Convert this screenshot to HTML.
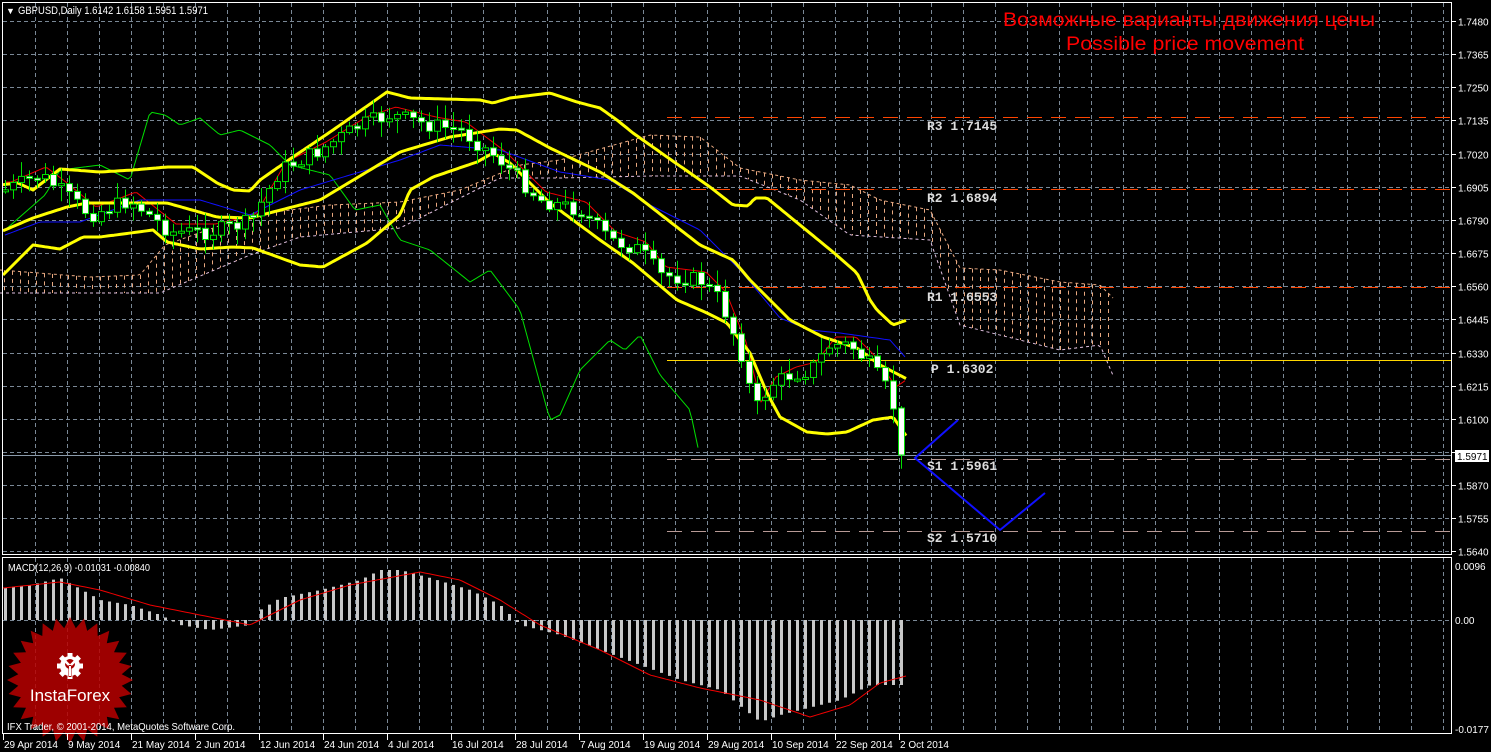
<!DOCTYPE html>
<html><head><meta charset="utf-8"><style>
html,body{margin:0;padding:0;background:#000;}
svg{display:block;font-family:"Liberation Sans",sans-serif;}
</style></head><body>
<svg id="s" width="1491" height="752" viewBox="0 0 1491 752" xmlns="http://www.w3.org/2000/svg">
<rect width="1491" height="752" fill="#000"/>
<g id="grid"></g>
<g id="cloud"></g>
<g id="ind"></g>
<g id="cand"></g>
<g id="macd"></g>
<g id="logo">
<polygon id="star" fill="#b80000" fill-opacity="0.85"/>
<g id="gear" fill="#fff"></g>
<circle cx="70" cy="664" r="5" fill="#a80000"/>
<path d="M64 660 L70 666 L76 660" stroke="#fff" stroke-width="2.5" fill="none"/>
<rect x="68.5" y="665" width="3" height="12" fill="#a80000"/>
<rect x="69" y="666" width="2" height="10" fill="#fff"/>
<text x="70" y="701" fill="#fff" font-size="17" text-anchor="middle">InstaForex</text>
</g>
<g fill="none" stroke="#fff" stroke-width="1">
<rect x="2.5" y="2.5" width="1449" height="552"/>
<rect x="2.5" y="557.5" width="1449" height="176"/>
</g>
<g id="axis" fill="#fff" font-size="10"></g>
<text x="6" y="14" fill="#fff" font-size="9">▼</text>
<text x="18" y="14" fill="#fff" font-size="11" textLength="190" lengthAdjust="spacingAndGlyphs">GBPUSD,Daily  1.6142 1.6158 1.5951 1.5971</text>
<text x="8" y="571" fill="#fff" font-size="10.5" textLength="142" lengthAdjust="spacingAndGlyphs">MACD(12,26,9) -0.01031 -0.00840</text>
<text x="7" y="730" fill="#fff" font-size="10.5" textLength="228" lengthAdjust="spacingAndGlyphs">IFX Trader, © 2001-2014, MetaQuotes Software Corp.</text>
<text x="1003" y="26" fill="#f00" font-size="19" textLength="372" lengthAdjust="spacingAndGlyphs">Возможные варианты движения цены</text>
<text x="1066" y="50" fill="#f00" font-size="19" textLength="238" lengthAdjust="spacingAndGlyphs">Possible price movement</text>
<g font-family="Liberation Mono,monospace" font-size="13" font-weight="bold" fill="#ddd">
<text x="927" y="130">R3 1.7145</text>
<text x="927" y="202">R2 1.6894</text>
<text x="927" y="301">R1 1.6553</text>
<text x="931" y="373">P 1.6302</text>
<text x="927" y="470">S1 1.5961</text>
<text x="927" y="542">S2 1.5710</text>
</g>
<polyline points="958,420 915,458 1000,530 1045,493" fill="none" stroke="#1010ff" stroke-width="2"/>
<rect x="1455" y="450" width="34" height="12" fill="#fff"/>
<text x="1457" y="460" fill="#000" font-size="10">1.5971</text>
</svg>
<script>
const NS="http://www.w3.org/2000/svg";
function el(p,t,a){const e=document.createElementNS(NS,t);for(const k in a)e.setAttribute(k,a[k]);document.getElementById(p).appendChild(e);return e;}
function interp(k,x){if(x<=k[0][0])return k[0][1];for(let i=1;i<k.length;i++){if(x<=k[i][0]){const a=k[i-1],b=k[i];return a[1]+(b[1]-a[1])*(x-a[0])/(b[0]-a[0]);}}return k[k.length-1][1];}
function pl(p,k,x0,x1,col,w,dash){let pts=[];for(let x=x0;x<=x1;x+=3)pts.push(x+","+interp(k,x).toFixed(1));const a={points:pts.join(" "),fill:"none",stroke:col,"stroke-width":w,"stroke-linejoin":"round"};if(dash)a["stroke-dasharray"]=dash;el(p,"polyline",a);}
for(let x=35;x<1450;x+=32){el("grid","line",{x1:x+.5,y1:3,x2:x+.5,y2:554,stroke:"#7a8896","stroke-dasharray":"4,3"});el("grid","line",{x1:x+.5,y1:558,x2:x+.5,y2:733,stroke:"#7a8896","stroke-dasharray":"4,3"});}
const prices=["1.7480","1.7365","1.7250","1.7135","1.7020","1.6905","1.6790","1.6675","1.6560","1.6445","1.6330","1.6215","1.6100","1.5985","1.5870","1.5755","1.5640"];
prices.forEach((p,i)=>{const y=Math.round(21+i*33.15)+.5;el("grid","line",{x1:3,y1:y,x2:1451,y2:y,stroke:"#7a8896","stroke-dasharray":"4,3"});el("axis","line",{x1:1452,y1:y,x2:1456,y2:y,stroke:"#fff"});if(i!=13){const t=el("axis","text",{x:1458,y:y+4});t.textContent=p;}});
el("grid","line",{x1:3,y1:620.5,x2:1451,y2:620.5,stroke:"#7a8896","stroke-dasharray":"4,3"});
[["0.0096",566],["0.00",620],["-0.0177",729]].forEach(a=>{const t=el("axis","text",{x:1455,y:a[1]+4});t.textContent=a[0];});
const dates=["29 Apr 2014","9 May 2014","21 May 2014","2 Jun 2014","12 Jun 2014","24 Jun 2014","4 Jul 2014","16 Jul 2014","28 Jul 2014","7 Aug 2014","19 Aug 2014","29 Aug 2014","10 Sep 2014","22 Sep 2014","2 Oct 2014"];
dates.forEach((d,i)=>{const x=3+i*64;el("axis","line",{x1:x+.5,y1:734,x2:x+.5,y2:740,stroke:"#fff"});const t=el("axis","text",{x:x+1,y:748});t.textContent=d;});
el("ind","line",{x1:667,y1:117.5,x2:1451,y2:117.5,stroke:"#ff4500","stroke-dasharray":"15,9"});
el("ind","line",{x1:667,y1:189.5,x2:1451,y2:189.5,stroke:"#ff4500","stroke-dasharray":"15,9"});
el("ind","line",{x1:667,y1:287.5,x2:1451,y2:287.5,stroke:"#ff4500","stroke-dasharray":"15,9"});
el("ind","line",{x1:667,y1:360.5,x2:1451,y2:360.5,stroke:"#ffd700"});
el("ind","line",{x1:667,y1:459.5,x2:1451,y2:459.5,stroke:"#b89a96","stroke-dasharray":"15,9"});
el("ind","line",{x1:667,y1:531.5,x2:1451,y2:531.5,stroke:"#b89a96","stroke-dasharray":"15,9"});
el("ind","line",{x1:3,y1:455.5,x2:1451,y2:455.5,stroke:"#8a9aaa"});
const ct=[[0,270],[90,277],[140,275],[165,245],[250,215],[330,205],[400,202],[460,190],[520,165],[560,160],[650,135],[700,137],[740,168],[800,180],[850,185],[880,200],[930,210],[960,268],[1000,270],[1060,282],[1100,285],[1115,300]];
const cb=[[0,293],[160,293],[250,255],[300,237],[400,228],[500,178],[560,178],[650,176],[740,176],[800,200],[850,235],[930,240],[960,325],[1000,335],[1060,350],[1100,345],[1115,380]];
for(let x=4;x<=1112;x+=8){el("cloud","line",{x1:x+.5,y1:interp(ct,x),x2:x+.5,y2:interp(cb,x),stroke:"#e8a880","stroke-dasharray":"4,4"});}
pl("cloud",ct,0,1115,"#e8a880",1,"3,3");pl("cloud",cb,0,1115,"#e0c0e0",1,"3,3");
const green=[[5,230],[45,195],[60,170],[100,165],[130,180],[150,112],[165,115],[180,125],[200,118],[220,135],[240,130],[270,145],[290,165],[330,175],[355,210],[380,205],[400,240],[430,250],[470,282],[490,270],[520,310],[550,420],[560,415],[580,370],[610,340],[625,350],[640,335],[660,375],[690,410],[700,457]];
pl("ind",green,5,700,"#00e000",1);
const close=[[5,190],[40,175],[60,190],[90,215],[130,200],[170,232],[210,232],[250,222],[280,170],[320,150],[360,125],[390,115],[430,125],[460,130],[500,160],[540,200],[580,210],[610,240],[640,250],[660,275],[700,280],[720,300],[740,350],[755,410],[770,385],[790,375],[810,370],[830,345],[850,345],[870,365],[890,395],[906,455]];
const red=close.map(p=>[p[0]+6,p[1]-8]);
red[red.length-1]=[906,380];
pl("ind",red,5,906,"#f00000",1);
const blue=[[5,235],[40,222],[80,222],[140,200],[200,200],[250,215],[300,190],[350,175],[400,160],[440,145],[500,150],[560,172],[610,180],[650,205],[700,230],[740,270],[780,318],[810,330],[840,333],[890,340],[906,358]];
pl("ind",blue,5,906,"#1010ff",1);
const up=[[0,185],[18,183],[33,190],[60,169],[100,172],[133,170],[167,167],[193,167],[217,183],[233,190],[250,191],[260,180],[293,157],[333,130],[387,92],[410,98],[480,100],[493,103],[510,98],[550,93],[577,102],[600,108],[617,120],[633,133],[667,157],[700,180],[710,187],[733,205],[748,206],[755,198],[767,198],[800,225],[833,252],[857,273],[870,300],[877,310],[893,325],[907,320]];
const mid=[[0,232],[33,218],[67,207],[87,203],[167,203],[217,217],[250,218],[300,205],[320,200],[400,152],[450,137],[500,129],[517,130],[550,148],[600,172],[633,193],[700,245],[733,260],[750,280],[790,320],[823,337],[857,348],[880,365],[907,379]];
const lo=[[0,278],[33,245],[60,249],[83,237],[100,237],[153,230],[167,242],[200,249],[233,247],[253,248],[300,265],[323,267],[367,243],[400,215],[410,190],[433,177],[477,162],[493,153],[510,163],[550,203],[600,240],[633,263],[677,300],[707,313],[727,323],[750,353],[767,393],[780,417],[807,432],[827,434],[847,432],[873,420],[893,417],[907,437]];
pl("ind",up,3,907,"#ffff00",3);pl("ind",mid,3,907,"#ffff00",3);pl("ind",lo,3,907,"#ffff00",3);
let seed=7;function rnd(){seed=(seed*9301+49297)%233280;return seed/233280;}
let prev=interp(close,5);
for(let x=5;x<=906;x+=8){let c=interp(close,x)+(rnd()-0.5)*16;if(x>=900)c=455;let o=prev;prev=c;
 if(x>=900)o=408;
 const top=Math.min(o,c)-2-rnd()*14,bot=Math.max(o,c)+2+rnd()*14;
 el("cand","line",{x1:x+.5,y1:top,x2:x+.5,y2:bot,stroke:"#00e000"});
 let h=Math.max(Math.abs(c-o),2);const bear=c>o;
 el("cand","rect",{x:x-3+.5,y:Math.min(o,c),width:6,height:h,fill:bear?"#fff":"#000",stroke:"#00e000"});}
const hist=[[0,588],[30,585],[60,578],[100,600],[130,605],[160,615],[170,620],[180,625],[210,630],[250,625],[260,610],[280,598],[320,590],[360,580],[380,570],[400,570],[430,578],[470,590],[500,605],[520,625],[560,635],[600,650],[640,665],[680,680],[720,690],[760,722],[780,715],[800,710],[840,700],[870,685],[906,685]];
for(let x=5;x<=906;x+=8){const y=interp(hist,x);el("macd","rect",{x:x-1,y:Math.min(y,620),width:3,height:Math.abs(y-620)||1,fill:"#c8c8c8"});}
const sig=[[3,588],[60,582],[100,590],[150,605],[200,615],[250,625],[300,600],[350,585],[420,572],[460,580],[500,600],[540,625],[600,650],[650,675],[700,688],[760,700],[810,717],[850,705],[880,683],[906,676]];
pl("macd",sig,3,906,"#f00000",1);
let pts=[];const n=28;for(let i=0;i<2*n;i++){const r=i%2?52:63;const a=i*Math.PI/n;pts.push((70+r*Math.cos(a)).toFixed(1)+","+(680+r*Math.sin(a)).toFixed(1));}
document.getElementById("star").setAttribute("points",pts.join(" "));
el("gear","circle",{cx:70,cy:666,r:10});
for(let i=0;i<8;i++){const a=i*Math.PI/4;el("gear","rect",{x:67.5,y:653,width:5,height:6,transform:`rotate(${i*45} 70 666)`});}
const lg=document.getElementById("logo");lg.parentNode.appendChild(lg);
document.querySelectorAll("#s > text, #s > g:not(#grid):not(#cloud):not(#ind):not(#cand):not(#macd):not(#logo), #s > polyline, #s > rect:not(:first-child)").forEach(e=>e.parentNode.appendChild(e));
</script>
</body></html>
